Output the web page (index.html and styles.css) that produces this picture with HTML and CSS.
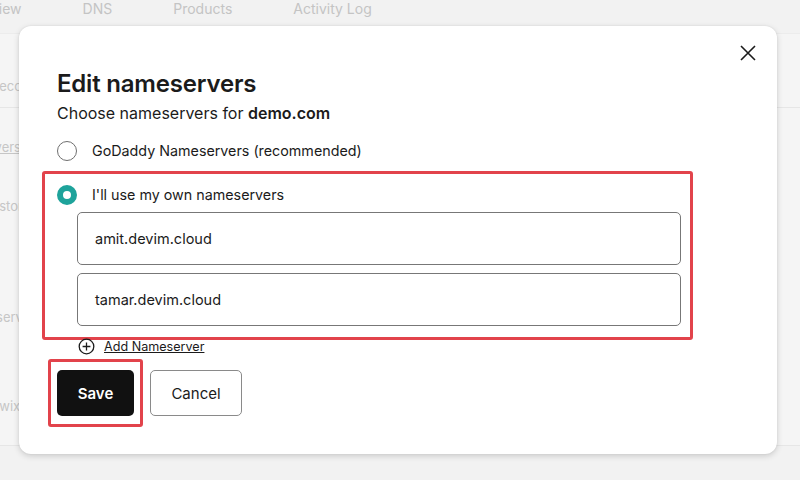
FILE: index.html
```html
<!DOCTYPE html>
<html lang="en">
<head>
<meta charset="utf-8">
<title>Edit nameservers</title>
<link rel="stylesheet" href="styles.css">
</head>
<body>
<div class="page">
  <nav class="tabs">
    <span class="tab first">Overview</span>
    <span class="tab">DNS</span>
    <span class="tab">Products</span>
    <span class="tab">Activity Log</span>
  </nav>
  <div class="bg-card">
    <div class="bg-row r1"><span>Records</span></div>
    <div class="bg-row r2"><span class="u">Nameservers</span></div>
    <div class="bg-row r3"><span>Custom</span></div>
    <div class="bg-row r4"><span>Nameservers</span></div>
    <div class="bg-row r5"><span>ns.wixdns.net</span></div>
  </div>

  <div class="modal" role="dialog">
    <button class="close" aria-label="Close">
      <svg width="18" height="18" viewBox="0 0 18 18"><path d="M2 2 L16 16 M16 2 L2 16" stroke="#1b1b1b" stroke-width="1.6" fill="none"/></svg>
    </button>
    <h1 class="title">Edit nameservers</h1>
    <p class="subtitle">Choose nameservers for <strong>demo.com</strong></p>

    <label class="option plain">
      <span class="radio"></span>
      <span class="opt-label">GoDaddy Nameservers (recommended)</span>
    </label>

    <div class="highlight">
      <label class="option">
        <span class="radio checked"></span>
        <span class="opt-label">I'll use my own nameservers</span>
      </label>
      <div class="inputs">
        <div class="field">amit.devim.cloud</div>
        <div class="field">tamar.devim.cloud</div>
      </div>
    </div>

    <div class="add">
      <svg width="17" height="17" viewBox="0 0 17 17"><circle cx="8.5" cy="8.5" r="7.3" stroke="#1b1b1b" stroke-width="1.3" fill="none"/><path d="M8.5 4.6 V12.4 M4.6 8.5 H12.4" stroke="#1b1b1b" stroke-width="1.3"/></svg>
      <span class="add-link">Add Nameserver</span>
    </div>

    <div class="actions">
      <div class="save-wrap"><button class="btn save">Save</button></div>
      <button class="btn cancel">Cancel</button>
    </div>
  </div>
</div>
</body>
</html>
```

FILE: styles.css
```css
* { box-sizing: border-box; }
html, body {
  margin: 0;
  padding: 0;
  width: 800px;
  height: 480px;
  overflow: hidden;
  background: #f2f2f2;
  font-family: "Inter", "Liberation Sans", sans-serif;
  color: #1b1b1b;
}
.page {
  position: relative;
  width: 800px;
  height: 480px;
}
.tabs {
  display: flex;
  gap: 61px;
  height: 17px;
  align-items: center;
  margin-left: -41px;
  font-size: 14px;
  color: #c4c4c4;
}
.bg-card {
  margin-top: 16px;
  height: 413px;
  background: #f5f5f5;
  border-top: 1px solid #ececec;
  border-bottom: 1px solid #e6e6e6;
  display: flex;
  flex-direction: column;
}
.bg-row {
  display: flex;
  align-items: flex-start;
  font-size: 13px;
  line-height: 16px;
  color: #c6c6c6;
  border-bottom: 1px solid transparent;
}
.r1 { height: 74px; padding-top: 44px; border-bottom-color: #e6e6e6; }
.r1 span { margin-left: -9px; }
.r2 { height: 78px; padding-top: 31px; }
.r2 span { margin-left: -61px; text-decoration: underline; }
.r3 { height: 40px; padding-top: 12px; }
.r3 span { margin-left: -18px; }
.r4 { height: 140px; padding-top: 83px; }
.r4 span { margin-left: -40px; }
.r5 { flex: 1; padding-top: 32px; }
.r5 span { margin-left: -19px; }

.modal {
  position: absolute;
  left: 19px;
  top: 26px;
  width: 758px;
  height: 428px;
  background: #fff;
  border-radius: 12px;
  box-shadow: 0 2px 6px rgba(0,0,0,0.16), 0 0 2px rgba(0,0,0,0.08);
  padding: 44px 38px 0 38px;
}
.close {
  position: absolute;
  top: 17px;
  right: 19px;
  width: 20px;
  height: 20px;
  padding: 1px;
  border: none;
  background: none;
}
.close svg { display: block; }
.title {
  margin: 0;
  font-size: 24px;
  font-weight: 600;
  letter-spacing: -0.2px;
  line-height: 28px;
}
.subtitle {
  margin: 5px 0 0 0;
  font-size: 16px;
  line-height: 20px;
}
.subtitle strong { font-weight: 600; }
.option {
  display: flex;
  align-items: center;
  gap: 15px;
  font-size: 14.3px;
  line-height: 20px;
}
.option.plain { margin-top: 18px; }
.radio {
  width: 20px;
  height: 20px;
  border-radius: 50%;
  border: 1px solid #6f6f6f;
  flex: none;
}
.radio.checked {
  border: 6px solid #1ea39b;
  background: #fff;
}
.highlight {
  margin: 10px 0 0 -15px;
  width: 651px;
  border: 3px solid #e2434b;
  border-radius: 3px;
  padding: 11px 9px 11px 12px;
}
.inputs {
  margin-top: 7px;
  padding-left: 20px;
  display: flex;
  flex-direction: column;
  gap: 8px;
}
.field {
  height: 53px;
  border: 1px solid #777;
  border-radius: 5px;
  padding-left: 17px;
  display: flex;
  align-items: center;
  font-size: 14.5px;
}
.add {
  display: flex;
  align-items: center;
  gap: 9px;
  margin: -2px 0 0 21px;
  height: 16px;
  font-size: 12.6px;
}
.add svg { display: block; }
.add-link { text-decoration: underline; }
.actions {
  display: flex;
  align-items: center;
  gap: 7px;
  margin: 5px 0 0 -9px;
}
.save-wrap {
  border: 3px solid #e2434b;
  border-radius: 3px;
  padding: 8px 6px;
}
.btn {
  height: 46px;
  border-radius: 5px;
  font-family: "Inter", "Liberation Sans", sans-serif;
  font-size: 15px;
}
.save {
  width: 77px;
  background: #111;
  color: #fff;
  border: none;
  font-weight: 600;
  display: block;
}
.cancel {
  width: 92px;
  background: #fff;
  color: #1b1b1b;
  border: 1px solid #8a8a8a;
}
```
